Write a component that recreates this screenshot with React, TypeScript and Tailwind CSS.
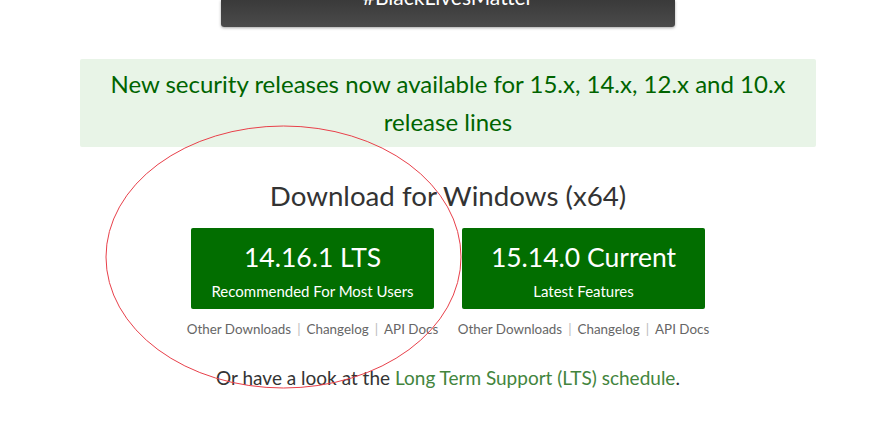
import React from "react";

const font = { fontFamily: '"Lato", "Open Sans", sans-serif' };

function Links() {
  return (
    <div className="flex w-[243px] items-center justify-center whitespace-nowrap text-[13.4px] leading-[18px] text-[#666]">
      <span>Other Downloads</span>
      <span className="mx-[6px] text-[#bbb]">|</span>
      <span>Changelog</span>
      <span className="mx-[6px] text-[#bbb]">|</span>
      <span>API Docs</span>
    </div>
  );
}

function Btn({ title, sub }: { title: string; sub: string }) {
  return (
    <div className="flex h-[81px] w-[243px] flex-col items-center rounded-[2px] bg-[#026e00] text-white">
      <div className="mt-[12px] text-[26.5px] leading-[34px]">{title}</div>
      <div className="mt-[7px] text-[15px] leading-[20px]">{sub}</div>
    </div>
  );
}

export default function App() {
  return (
    <div className="relative h-[429px] w-[896px] overflow-hidden bg-white" style={font}>
      <div className="mx-auto flex h-[27px] w-[454px] justify-center overflow-hidden rounded-b-[3px] bg-gradient-to-b from-[#3a3a3a] to-[#4b4b4b] shadow-[0_1px_3px_rgba(0,0,0,0.35)]">
        <span className="-mt-[17px] text-[21px] leading-[28px] text-white">#BlackLivesMatter</span>
      </div>

      <div className="mx-[80px] mt-[32px] rounded-[2px] bg-[#e8f4e7] px-[20px] py-[6px] text-center text-[24px] leading-[38px] text-[#006400]">
        New security releases now available for 15.x, 14.x, 12.x and 10.x release lines
      </div>

      <div className="mt-[29px] text-center text-[27.7px] leading-[40px] text-[#333]">Download for Windows (x64)</div>

      <div className="mt-[12px] flex justify-center gap-[28px]">
        <div className="flex w-[243px] flex-col items-center">
          <Btn title="14.16.1 LTS" sub="Recommended For Most Users" />
          <div className="mt-[11px]"><Links /></div>
        </div>
        <div className="flex w-[243px] flex-col items-center">
          <Btn title="15.14.0 Current" sub="Latest Features" />
          <div className="mt-[11px]"><Links /></div>
        </div>
      </div>

      <div className="mt-[28px] text-center text-[19px] leading-[24px] text-[#333]">
        Or have a look at the <span className="text-[#43853d]">Long Term Support (LTS) schedule</span>.
      </div>

      <svg className="pointer-events-none absolute left-0 top-0" width="896" height="429">
        <ellipse cx="283.5" cy="257" rx="177.5" ry="131" fill="none" stroke="#e8404a" strokeWidth="1" />
      </svg>
    </div>
  );
}
